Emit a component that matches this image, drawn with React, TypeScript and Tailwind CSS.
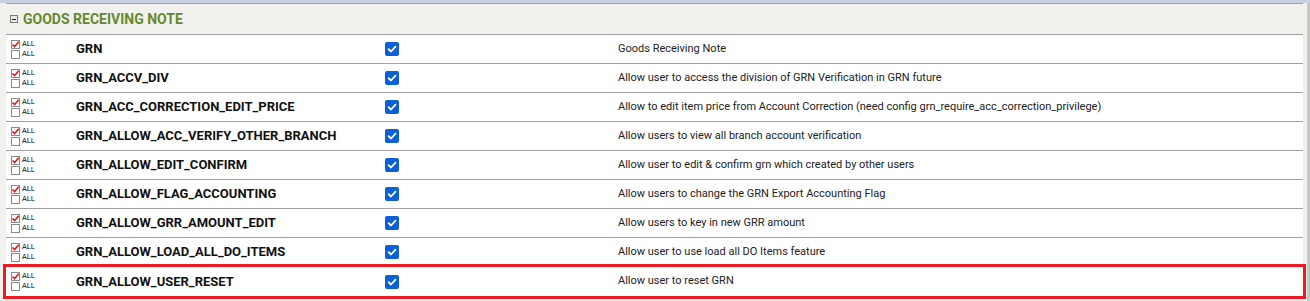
import React from 'react'

const rows = [
  { name: 'GRN', desc: 'Goods Receiving Note' },
  { name: 'GRN_ACCV_DIV', desc: 'Allow user to access the division of GRN Verification in GRN future' },
  { name: 'GRN_ACC_CORRECTION_EDIT_PRICE', desc: 'Allow to edit item price from Account Correction (need config grn_require_acc_correction_privilege)' },
  { name: 'GRN_ALLOW_ACC_VERIFY_OTHER_BRANCH', desc: 'Allow users to view all branch account verification' },
  { name: 'GRN_ALLOW_EDIT_CONFIRM', desc: 'Allow user to edit & confirm grn which created by other users' },
  { name: 'GRN_ALLOW_FLAG_ACCOUNTING', desc: 'Allow users to change the GRN Export Accounting Flag' },
  { name: 'GRN_ALLOW_GRR_AMOUNT_EDIT', desc: 'Allow users to key in new GRR amount' },
  { name: 'GRN_ALLOW_LOAD_ALL_DO_ITEMS', desc: 'Allow user to use load all DO Items feature' },
  { name: 'GRN_ALLOW_USER_RESET', desc: 'Allow user to reset GRN' },
]

const SmallBox = ({ checked }: { checked?: boolean }) => (
  <svg width="9" height="9" viewBox="0 0 9 9" className="shrink-0">
    <rect x="0.5" y="0.5" width="8" height="8" fill="#fff" stroke="#8a8a8a" />
    {checked && <path d="M1.5 4.5 L3.6 6.6 L7.8 1.8" fill="none" stroke="#e0161e" strokeWidth="1.6" />}
  </svg>
)

const AllToggle = () => (
  <div className="flex flex-col gap-[1px] pl-[5px] w-[70px] shrink-0">
    <div className="flex items-center gap-[2px] h-[8px]">
      <SmallBox checked />
      <span className="text-[7px] leading-none text-black font-['DejaVu_Sans',sans-serif]">ALL</span>
    </div>
    <div className="flex items-center gap-[2px] h-[8px] mt-[1px]">
      <SmallBox />
      <span className="text-[7px] leading-none text-black font-['DejaVu_Sans',sans-serif]">ALL</span>
    </div>
  </div>
)

const BlueCheck = () => (
  <div className="w-[14px] h-[14px] rounded-[2px] bg-[#0b5fd7] flex items-center justify-center">
    <svg width="10" height="10" viewBox="0 0 10 10">
      <path d="M1.6 5.2 L4 7.5 L8.5 2.6" fill="none" stroke="#fff" strokeWidth="1.8" strokeLinecap="round" strokeLinejoin="round" />
    </svg>
  </div>
)

export default function App() {
  return (
    <div className="w-[1310px] h-[301px] bg-[#f1f1ed] border-t-[3px] border-[#c9d1e1] overflow-hidden">
      <div className="flex h-full">
        <div className="w-[6px] shrink-0" />
        <div className="w-[1297px] shrink-0">
          {/* header */}
          <div className="flex items-center h-[32px] border-y border-[#a0a0a0] bg-[#f1f1ed] pl-[4px]">
            <div className="w-[8px] h-[8px] border border-[#7a7a7a] bg-[#e8e8e8] flex items-center justify-center">
              <div className="w-[4px] h-[1px] bg-[#222]" />
            </div>
            <span className="ml-[5px] text-[14px] font-bold text-[#66892f] font-['Roboto',sans-serif]">
              GOODS RECEIVING NOTE
            </span>
          </div>

          {rows.map((r, i) => {
            const last = i === rows.length - 1
            return (
              <div
                key={r.name}
                className={
                  last
                    ? 'relative flex items-center h-[29px] bg-white outline-[3px] outline-solid outline-[#ed1c24]'
                    : 'flex items-center h-[29px] bg-white border-b border-[#a0a0a0]'
                }
              >
                <AllToggle />
                <div className="w-[309px] shrink-0 text-[13px] font-bold text-[#111] font-['Roboto',sans-serif]">
                  {r.name}
                </div>
                <div className="w-[233px] shrink-0">
                  <BlueCheck />
                </div>
                <div className="text-[11px] text-[#222] font-['Roboto',sans-serif]">{r.desc}</div>
              </div>
            )
          })}
        </div>
        <div className="w-[4px] shrink-0" />
        <div className="w-[3px] shrink-0 bg-[#c8c8c8]" />
      </div>
    </div>
  )
}
